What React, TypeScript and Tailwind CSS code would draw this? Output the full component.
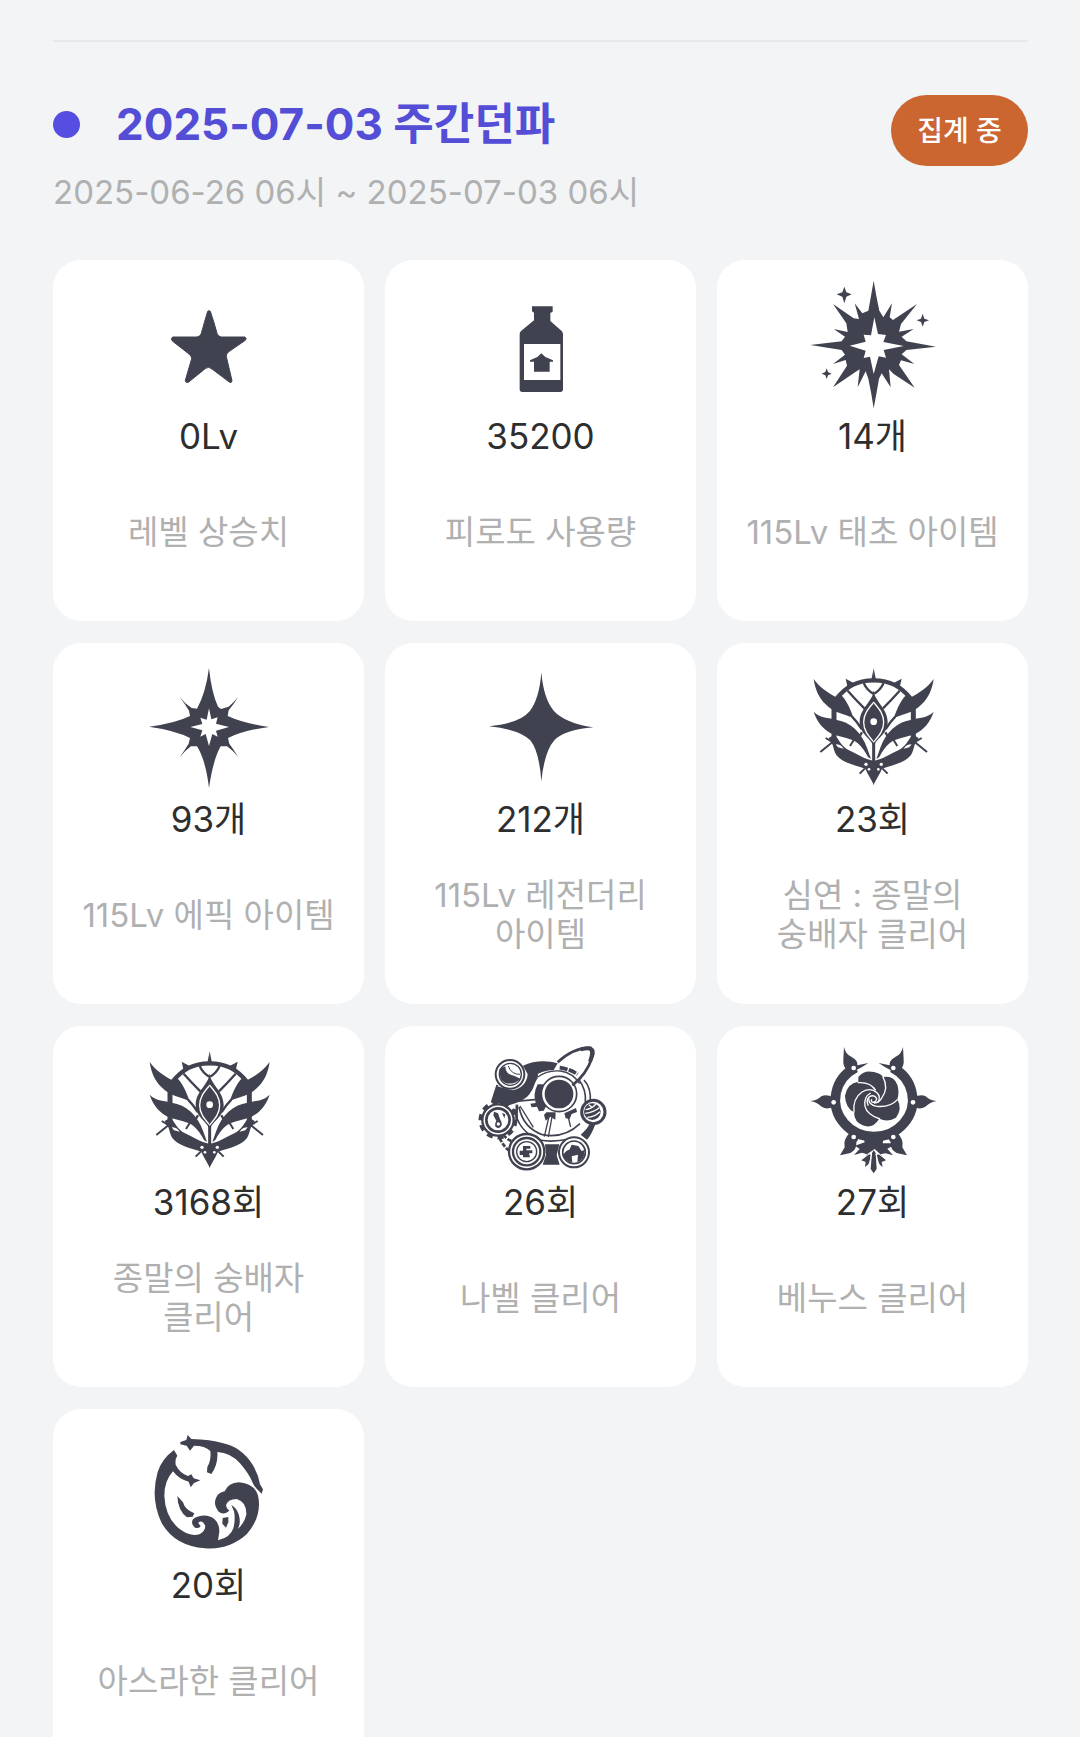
import type { ReactNode } from 'react';

const INK = '#40424f';

interface IconProps {
  viewBox: string;
  children: ReactNode;
}

function Icon({ viewBox, children }: IconProps) {
  return (
    <svg viewBox={viewBox} className="h-[140px] w-[140px]" fill={INK} aria-hidden="true">
      {children}
    </svg>
  );
}

function StarIcon() {
  return (
    <Icon viewBox="-4 -12 420 420">
      <path
        d="M202 94Q206 90 210 94L221 128L230 160Q233 170 243 171H314Q320 176 315 181L264 216Q257 222 258 230L275 302Q275 309 268 307L215 267Q205 258 196 265L144 307Q134 309 135 301L154 236Q154 228 146 222L96 183Q90 176 97 171H170Q180 170 183 160L192 128Z"
        stroke={INK}
        strokeWidth="3"
        strokeLinejoin="round"
      />
    </Icon>
  );
}

function PotionIcon() {
  return (
    <Icon viewBox="-58 -12 420 420">
      <path d="M125 79H187V95L180 99V123L214 153Q218 157 218 163V328Q218 336 210 336H96Q88 336 88 328V163Q88 157 92 153L131 121V98L125 94Z" />
      <path d="M101 192H210V300H101Z" fill="#fff" />
      <path d="M153 220L165 231L188 241V245H178V275H131V245H119V241L141 231Z" />
    </Icon>
  );
}

function PrimevalIcon() {
  return (
    <Icon viewBox="8 18 420 420">
      <path d="M220 32L228 78L237 122L249 142L275 100L268 142L278 150L350 102L302 162L296 185L340 177L304 200L318 214L407 230L318 240L304 253L342 282L302 271L296 285L343 353L280 312L266 298L271 352L244 310L236 326L228 372L220 415L213 372L204 326L196 304L172 352L178 298L162 308L98 352L140 287L136 270L98 282L134 254L124 240L30 225L124 214L134 200L100 177L142 186L138 160L98 102L160 145L176 147L163 100L186 130L204 122L212 78Z" />
      <path
        d="M222 142L233 192L257 195L249 216L310 228L250 240L257 263L235 259L220 312L209 260L190 264L196 242L148 227L196 215L190 194L212 196Z"
        fill="#fff"
      />
      <path d="M132 50L138 67L154 73L138 80L132 100L126 80L109 73L126 67Z" />
      <path d="M367 131L372 146L386 151L372 156L367 170L362 156L349 151L362 146Z" />
      <path d="M79 295L83 306L94 311L83 316L79 327L75 316L64 311L75 306Z" />
    </Icon>
  );
}

function EpicIcon() {
  return (
    <Icon viewBox="-4 -3 420 420">
      <path d="M206 24Q214 100 233 140L242 147L265 140Q280 128 293 111Q281 132 265 151L262 168Q310 190 386 201Q310 211 263 234L267 251Q281 270 293 290Q277 271 260 259L241 259Q218 300 206 384Q196 300 170 259L152 259Q134 272 118 292Q134 269 145 251L149 234Q105 211 26 200Q105 190 149 168L146 152Q134 132 118 111Q134 132 154 144L170 146Q196 100 206 24Z" />
      <path
        d="M206 145L213 178L232 172L227 191L266 201L227 212L232 230L216 222L206 258L196 222L180 230L186 211L150 201L186 192L180 173L199 179Z"
        fill="#fff"
      />
    </Icon>
  );
}

function LegendaryIcon() {
  return (
    <Icon viewBox="0 0 420 420">
      <path d="M211 40Q218 120 248 155Q280 191 367 205Q280 212 250 244Q220 278 211 367Q205 278 178 244Q145 211 54 202Q146 193 176 157Q205 120 211 40Z" />
    </Icon>
  );
}

function CrestHalf() {
  return (
    <>
      <path d="M40 72C60 100 85 114 108 127L122 119C136 133 148 155 160 190C140 178 100 176 76 148C54 128 44 100 40 72Z" />
      <path d="M40 170C60 190 85 188 106 194C150 200 184 232 200 278L212 312L203 306C184 270 166 256 140 250L104 240C68 226 50 200 40 170Z" />
      <path d="M85 249L104 238C116 258 126 276 146 286C172 298 190 312 221 318V390L201 354L195 341C160 330 124 322 108 300C98 284 100 270 92 262Z" />
      <path d="M109 131Q151 75 221 76" fill="none" stroke={INK} strokeWidth="13" />
      <path d="M101 145V245" fill="none" stroke={INK} strokeWidth="15" />
      <path d="M220 40L213 74H221ZM136 71L164 86L143 102Z" />
      <path d="M142 107Q166 134 192 160M190 84Q200 106 219 116" fill="none" stroke={INK} strokeWidth="7" />
      <path d="M155 185Q170 200 184 222M185 232Q178 248 166 256M221 260V322" fill="none" stroke={INK} strokeWidth="7" />
      <path d="M60 291L96 262M76 249L98 262M149 273L162 252M178 356L194 340" fill="none" stroke={INK} strokeWidth="6" />
      <path d="M221 106C214 144 180 158 178 200C178 238 210 246 221 276Z" />
      <path d="M221 141C202 163 190 178 190 202C190 228 206 244 221 262" fill="none" stroke="#fff" strokeWidth="4" />
      <circle cx="197" cy="328" r="5" fill="#fff" />
      <circle cx="206" cy="343" r="4" fill="#fff" />
      <path d="M106 268Q122 268 130 281L113 277Z" fill="#fff" />
    </>
  );
}

function CrestIcon() {
  return (
    <Icon viewBox="8 12 420 420">
      <CrestHalf />
      <g transform="translate(440 0) scale(-1 1)">
        <CrestHalf />
      </g>
      <circle cx="220" cy="200" r="10" fill="#fff" />
    </Icon>
  );
}

function NabelIcon() {
  return (
    <Icon viewBox="16 21 420 420">
      <path d="M172 92C205 76 245 76 276 85L264 106C240 106 226 112 217 117L216 130C205 145 205 160 196 170C184 192 160 202 122 213L80 198L95 154L140 166C168 162 184 142 186 118Z" />
      <g fill="none" stroke={INK}>
        <path d="M95 150L78 203" strokeWidth="6" />
        <path d="M148 199L208 194" strokeWidth="5" />
        <path d="M160 216Q172 278 230 299Q295 312 343 266" strokeWidth="5" />
        <path d="M147 222Q157 290 222 315Q260 323 310 312" strokeWidth="5" />
        <path d="M355 135Q377 158 374 202M339 133Q363 165 359 203" strokeWidth="5" />
        <path d="M251 240L236 305M259 246L248 306M307 243L315 276M163 213L203 277" strokeWidth="4" />
        <path d="M102 310Q119 342 133 348M113 300Q133 323 148 317" strokeWidth="8" strokeDasharray="13 4" />
        <path d="M154 209Q152 233 153 257" strokeWidth="8" />
        <path d="M282 98Q312 102 336 118" strokeWidth="11" strokeDasharray="24 4" />
        <path d="M216 126Q246 104 285 108Q322 114 342 146" strokeWidth="4" />
      </g>
      <path d="M216 148Q201 177 210 204L194 206L198 217L214 215L220 229L234 227L243 211Q222 181 233 148Z" />
      <circle cx="280" cy="177" r="53" fill="#fff" stroke={INK} strokeWidth="5" />
      <circle cx="280" cy="177" r="43" />
      <path d="M242 232H270L269 254L254 245L240 257L235 240ZM296 235L331 219L334 231L318 237L312 252L300 250Z" />
      <path d="M345 299Q366 282 374 262L389 268Q376 303 364 314ZM238 328H281L273 361L282 389H231L241 360Z" />
      <path d="M276 82Q321 39 374 38Q389 47 380 66Q363 118 320 151" fill="none" stroke={INK} strokeWidth="8" />
      <path d="M345 43Q374 36 378 46Q382 56 373 80" fill="none" stroke={INK} strokeWidth="12" />

      <circle cx="133" cy="118" r="43" fill="#fff" stroke={INK} strokeWidth="6" />
      <circle cx="134" cy="118" r="33" fill="none" stroke={INK} strokeWidth="4" />
      <path d="M102 101L119 94Q119 119 145 122L164 131Q145 151 119 144Q99 134 102 101Z" />
      <path d="M128 93Q137 119 163 118M115 126L129 133" fill="none" stroke={INK} strokeWidth="3" />

      <circle cx="97" cy="255" r="53" fill="none" stroke={INK} strokeWidth="11" strokeDasharray="18 15" />
      <circle cx="97" cy="255" r="47" fill="#fff" stroke={INK} strokeWidth="7" />
      <circle cx="97" cy="255" r="35" fill="none" stroke={INK} strokeWidth="8" />
      <path d="M85 230L97 235L103 252Q116 272 98 280Q82 274 92 257L83 241ZM109 234L119 238L116 250Z" />
      <circle cx="98" cy="267" r="5" fill="#fff" />

      <circle cx="183" cy="350" r="53" fill="#fff" stroke={INK} strokeWidth="7" />
      <circle cx="183" cy="350" r="41" fill="none" stroke={INK} strokeWidth="7" />
      <circle cx="183" cy="350" r="30" fill="none" stroke={INK} strokeWidth="4" />
      <path d="M172 333H194V341H182V346H200V355H190L193 367H172V360H162V347H172Z" />

      <circle cx="325" cy="352" r="45" fill="#fff" stroke={INK} strokeWidth="6" />
      <circle cx="325" cy="352" r="34" fill="none" stroke={INK} strokeWidth="5" />
      <path d="M293 359Q301 345 311 344L318 329L338 333L348 348L357 345Q357 376 335 381L337 359L318 364L320 382Q299 380 293 359Z" />

      <circle cx="383" cy="231" r="35" fill="#fff" stroke={INK} strokeWidth="9" />
      <circle cx="380" cy="230" r="25" fill={INK} />
      <path d="M360 224Q378 222 391 207M359 235Q384 231 401 218M365 247Q386 246 403 230M369 209L378 216" fill="none" stroke="#fff" strokeWidth="4" />
    </Icon>
  );
}

function VenusHalf() {
  return (
    <>
      <path d="M131 36Q136 59 153 65Q174 77 171 91L204 84Q184 98 170 104Q151 125 141 107Q127 95 129 73Z" />
      <path d="M30 198Q52 196 63 184Q78 176 98 187V216Q79 225 64 215Q50 202 30 198Z" />
      <path d="M119 361Q139 356 150 354Q170 344 168 322L180 303L147 295Q128 314 133 337Z" />
    </>
  );
}

function VenusIcon() {
  return (
    <Icon viewBox="8 21 420 420">
      <path d="M166 98A116 110 0 1 0 276 98" fill="none" stroke={INK} strokeWidth="29" />
      <VenusHalf />
      <g transform="translate(439 0) scale(-1 1)">
        <VenusHalf />
      </g>
      <g fill="#fff">
        <circle cx="160" cy="99" r="7" />
        <circle cx="279" cy="99" r="7" />
        <circle cx="100" cy="202" r="7" />
        <circle cx="338" cy="202" r="7" />
        <circle cx="160" cy="306" r="7" />
        <circle cx="279" cy="306" r="7" />
      </g>
      <path d="M174 126Q190 104 221 111Q242 116 249 126Q280 120 291 149Q298 171 291 193Q307 223 287 248Q262 263 237 251Q217 283 187 271Q162 262 161 232Q135 217 134 182Q141 144 174 140Z" />
      <g fill="none" stroke="#fff" strokeWidth="4">
        <path d="M172 143Q210 140 226 166" />
        <path d="M247 124Q267 159 243 191Q234 205 221 204" />
        <path d="M292 193Q270 218 229 214Q205 211 205 190" />
        <path d="M239 252Q200 239 194 214Q190 185 211 174" />
        <path d="M161 233Q156 191 185 171Q211 156 230 173Q243 186 232 203" />
        <path d="M204 212Q196 195 207 185Q222 178 229 190Q228 201 218 202Q211 200 214 193" />
      </g>
      <path d="M188 302H252L247 325H275V334L261 341L278 361L255 355L240 358L223 342L200 358L185 353L161 360L178 342L164 332L193 322Z" />
      <path d="M215 354L220 346L226 354L229 402L220 415L211 402ZM202 357L211 359Q211 387 194 396L196 381L183 376ZM230 359L239 357L257 376L244 381L247 396Q229 385 230 359Z" />
      <path d="M207 356L186 372M214 357L208 385M227 357L234 385M233 355L255 372" fill="none" stroke="#fff" strokeWidth="3" />
    </Icon>
  );
}

function AsrahanIcon() {
  return (
    <Icon viewBox="-4 0 420 420">
      <path d="M101 75L111 92Q104 101 106 119Q118 144 143 153L153 148L160 160L180 166L161 174L151 187L145 170Q116 163 98 139Q72 167 72 213Q75 279 119 313Q150 336 177 328Q194 319 195 303Q186 284 175 292Q173 297 181 302Q178 312 164 308Q150 296 158 283Q174 270 200 272Q237 279 237 320L233 346Q270 338 279 310Q286 282 281 259L273 240Q289 249 295 268Q303 295 292 312Q313 294 318 268Q319 231 289 222Q263 222 257 241Q258 252 267 257Q250 272 235 260Q218 238 227 219Q233 203 253 199Q264 173 296 172Q351 178 355 223Q362 278 319 328Q265 376 194 370Q103 363 64 294Q29 221 52 141Q65 101 101 75Z" />
      <path d="M142 30L153 42Q212 44 246 54Q302 65 337 119Q354 148 359 178L368 193L364 206Q344 190 337 173Q326 146 299 115Q271 83 231 81Q234 118 213 147L200 142L201 126Q213 107 210 78Q194 62 161 62L149 77L139 62L120 58V51L138 45Z" />
      <path d="M111 213L128 232Q133 253 162 265L157 275L140 277Q113 258 111 213Z" />
      <path d="M247 279L264 276V292L257 308L246 296Z" />
    </Icon>
  );
}

const STATS: { icon: () => ReactNode; value: string; label: string }[] = [
  { icon: StarIcon, value: '0Lv', label: '레벨 상승치' },
  { icon: PotionIcon, value: '35200', label: '피로도 사용량' },
  { icon: PrimevalIcon, value: '14개', label: '115Lv 태초 아이템' },
  { icon: EpicIcon, value: '93개', label: '115Lv 에픽 아이템' },
  { icon: LegendaryIcon, value: '212개', label: '115Lv 레전더리 아이템' },
  { icon: CrestIcon, value: '23회', label: '심연 : 종말의 숭배자 클리어' },
  { icon: CrestIcon, value: '3168회', label: '종말의 숭배자 클리어' },
  { icon: NabelIcon, value: '26회', label: '나벨 클리어' },
  { icon: VenusIcon, value: '27회', label: '베누스 클리어' },
  { icon: AsrahanIcon, value: '20회', label: '아스라한 클리어' },
];

export default function App() {
  return (
    <main className="h-screen overflow-hidden bg-[#f2f4f6] pt-10 pr-[52px] pl-[53px] font-['Inter','Noto_Sans_CJK_KR',sans-serif]">
      <section className="border-t-2 border-[#e6e8ea]">
        {/* Header */}
        <header className="flex items-start justify-between pt-[53px]">
          <div>
            <div className="flex h-[58px] items-center gap-9">
              <span className="h-[27px] w-[27px] rounded-full bg-[#554ee0]" />
              <h2 className="text-[44px] leading-[58px] font-bold text-[#544dd6]">2025-07-03 주간던파</h2>
            </div>
            <p className="mt-3 text-[33px] leading-[54px] text-[#b0b0b0]">2025-06-26 06시 ~ 2025-07-03 06시</p>
          </div>
          <span className="flex h-[71px] w-[137px] items-center justify-center rounded-full bg-[#cb6631] text-[28px] font-medium text-white">
            집계 중
          </span>
        </header>

        {/* Weekly stats */}
        <ul className="mt-[41px] grid grid-cols-3 gap-x-[21px] gap-y-[22px]">
          {STATS.map(({ icon: StatIcon, value, label }) => (
            <li key={label} className="flex flex-col items-center rounded-[28px] bg-white px-6 pt-4 pb-[49px] text-center">
              <StatIcon />
              <strong className="text-[35px] leading-10 font-normal text-[#2e2e2e]">{value}</strong>
              <p className="mt-9 flex h-20 items-center text-[33px] leading-[39px] break-keep text-[#b0b0b0]">{label}</p>
            </li>
          ))}
        </ul>
      </section>
    </main>
  );
}
